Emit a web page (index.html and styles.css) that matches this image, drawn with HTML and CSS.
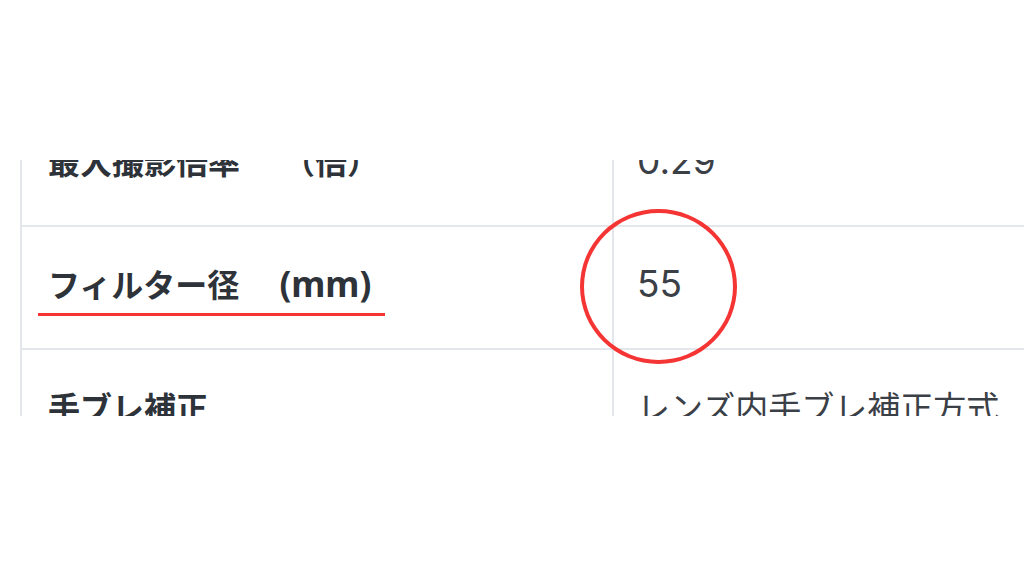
FILE: index.html
```html
<!DOCTYPE html>
<html lang="ja">
<head>
    <meta charset="UTF-8">
    <meta name="viewport" content="width=device-width, initial-scale=1.0">
    <title>スペック表</title>
    <link rel="stylesheet" href="styles.css">
</head>
<body>
    <div class="frame">
        <div class="specs">
            <div class="spec-row">
                <div class="spec-label">最大撮影倍率<span class="unit unit-wide">（倍）</span></div>
                <div class="spec-value num">0.29</div>
            </div>
            <div class="spec-row">
                <div class="spec-label"><span class="marked">フィルター径<span class="unit">(mm)</span></span></div>
                <div class="spec-value num"><span class="circled">55</span></div>
            </div>
            <div class="spec-row">
                <div class="spec-label">手ブレ補正</div>
                <div class="spec-value">レンズ内手ブレ補正方式</div>
            </div>
        </div>
    </div>
</body>
</html>
```

FILE: styles.css
```css
:root {
    --line: #e3e6eb;
    --label: #2e3239;
    --value: #3b4047;
    --mark: #f53434;
}

* {
    margin: 0;
    padding: 0;
    box-sizing: border-box;
}

html, body {
    height: 100%;
    overflow: hidden;
}

body {
    background: #fff;
    font-family: "Noto Sans CJK JP", "Noto Sans", sans-serif;
}

/* cropped window onto the spec table */
.frame {
    margin-top: 160px;
    height: 256px;
    overflow: hidden;
}

.specs {
    margin: -56px 0 0 20px;
    border-left: 2px solid var(--line);
}

.spec-row {
    display: grid;
    grid-template-columns: 592px 1fr;
    height: 123px;
    border-bottom: 2px solid var(--line);
}

.spec-label,
.spec-value {
    display: flex;
    align-items: center;
    padding: 0 0 9px 26px;
    white-space: nowrap;
}

.spec-label {
    border-right: 2px solid var(--line);
    color: var(--label);
    font-size: 32px;
    font-weight: bold;
}

.spec-value {
    padding-left: 23px;
    color: var(--value);
    font-size: 33px;
}

.spec-value.num {
    font-family: Inter, "Noto Sans CJK JP", sans-serif;
    font-size: 37px;
}

.unit {
    margin-left: 40px;
    font-family: "Noto Sans", "Noto Sans CJK JP", sans-serif;
    font-size: 35px;
}

.unit-wide {
    margin-left: 43px;
    font-family: "Noto Sans CJK JP", sans-serif;
    font-size: 32px;
}

/* red annotations */
.marked {
    position: relative;
}

.marked::after {
    content: '';
    position: absolute;
    left: -10px;
    right: -14px;
    bottom: -9px;
    height: 3px;
    background: var(--mark);
}

.circled {
    position: relative;
}

.circled::before {
    content: '';
    position: absolute;
    left: 50%;
    top: 50%;
    width: 149px;
    height: 147px;
    margin: -74px 0 0 -80px;
    border: 4px solid var(--mark);
    border-radius: 50%;
}
```
